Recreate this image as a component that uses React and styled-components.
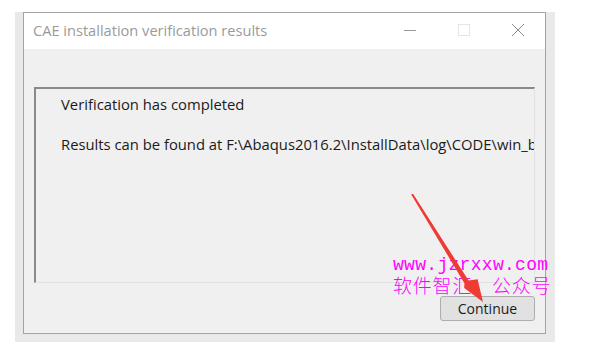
import React from 'react'
import styled, { createGlobalStyle } from 'styled-components'

const GlobalStyle = createGlobalStyle`
  html, body {
    margin: 0;
    padding: 0;
    background: #ffffff;
  }
`

const Page = styled.div`
  position: relative;
  width: 598px;
  height: 350px;
  overflow: hidden;
  padding: 12px 0 0 15px;
  box-sizing: border-box;
  font-family: "Open Sans", "Noto Sans", sans-serif;
`

const Frame = styled.div`
  width: 540px;
  padding: 0 9px 8px 8px;
  box-sizing: border-box;
  background: #e9e9e9;
`

const Window = styled.div`
  width: 523px;
  height: 322px;
  box-sizing: border-box;
  border: 1px solid #a3a3a3;
  display: flex;
  flex-direction: column;
  background: #f0f0f0;
`

const TitleBar = styled.div`
  height: 36px;
  background: #ffffff;
  display: flex;
  align-items: center;
  padding-left: 9px;
  flex-shrink: 0;
`

const Title = styled.div`
  flex: 1;
  font-size: 14.6px;
  color: #9a9a9a;
  padding-bottom: 2px;
`

const Controls = styled.div`
  display: flex;
  align-items: center;
  height: 100%;
`

const ControlButton = styled.div`
  width: 54px;
  height: 100%;
  display: flex;
  align-items: center;
  justify-content: center;
  padding-bottom: 3px;
  box-sizing: border-box;
`

const Body = styled.div`
  flex: 1;
  display: flex;
  flex-direction: column;
  padding: 38px 10px 10px 10px;
`

const ResultBox = styled.div`
  height: 196px;
  box-sizing: border-box;
  border-top: 2px solid #8a8a8a;
  border-left: 2px solid #8a8a8a;
  border-right: 1px solid #e2e2e2;
  border-bottom: 1px solid #e2e2e2;
  overflow: hidden;
  padding: 5px 0 0 25px;
`

const Line = styled.div`
  font-size: 14.8px;
  line-height: 20px;
  color: #1b1b1b;
  white-space: nowrap;
  margin-bottom: ${p => p.gap || 0}px;
`

const Actions = styled.div`
  display: flex;
  justify-content: flex-end;
  margin-top: 13px;
`

const Button = styled.button`
  width: 95px;
  height: 25px;
  background: #e1e1e1;
  border: 1px solid #adadad;
  border-radius: 3px;
  font-family: inherit;
  font-size: 14px;
  color: #1b1b1b;
  padding: 0;
`

const Watermark = styled.div`
  position: absolute;
  left: ${p => p.x}px;
  top: ${p => p.y}px;
  color: #ff00ff;
  font-family: ${p => (p.cjk ? '"Noto Sans CJK SC", sans-serif' : '"Liberation Mono", monospace')};
  font-weight: ${p => (p.cjk ? 300 : 400)};
  font-size: ${p => p.size}px;
  line-height: 1;
  white-space: nowrap;
  letter-spacing: ${p => p.spacing || 0}px;
`

const Arrow = styled.svg`
  position: absolute;
  left: 0;
  top: 0;
  width: 598px;
  height: 350px;
  pointer-events: none;
`

export default function App() {
  return (
    <Page>
      <GlobalStyle />
      <Frame>
        <Window>
          <TitleBar>
            <Title>CAE installation verification results</Title>
            <Controls>
              <ControlButton>
                <svg width="14" height="14" viewBox="0 0 14 14">
                  <path d="M1 7.5h12" stroke="#9a9a9a" strokeWidth="1" />
                </svg>
              </ControlButton>
              <ControlButton>
                <svg width="14" height="14" viewBox="0 0 14 14">
                  <rect x="1.5" y="1.5" width="11" height="11" fill="none" stroke="#e6e6e6" strokeWidth="1" />
                </svg>
              </ControlButton>
              <ControlButton>
                <svg width="14" height="14" viewBox="0 0 14 14">
                  <path d="M1 1L13 13M13 1L1 13" stroke="#8c8c8c" strokeWidth="1" />
                </svg>
              </ControlButton>
            </Controls>
          </TitleBar>
          <Body>
            <ResultBox>
              <Line gap={20}>Verification has completed</Line>
              <Line>Results can be found at F:\Abaqus2016.2\InstallData\log\CODE\win_b86_64</Line>
            </ResultBox>
            <Actions>
              <Button>Continue</Button>
            </Actions>
          </Body>
        </Window>
      </Frame>
      <Watermark x={393} y={256} size={18} spacing={0.3}>www.jzrxxw.com</Watermark>
      <Watermark x={393} y={275} size={19} spacing={0.8} cjk>软件智汇　公众号</Watermark>
      <Arrow viewBox="0 0 598 350">
        <polygon
          points="411.2,194.5 413,193.8 468.6,280.5 477.6,279.2 483,302 464.2,288 464.4,283.2"
          fill="#ee3b33"
        />
      </Arrow>
    </Page>
  )
}
